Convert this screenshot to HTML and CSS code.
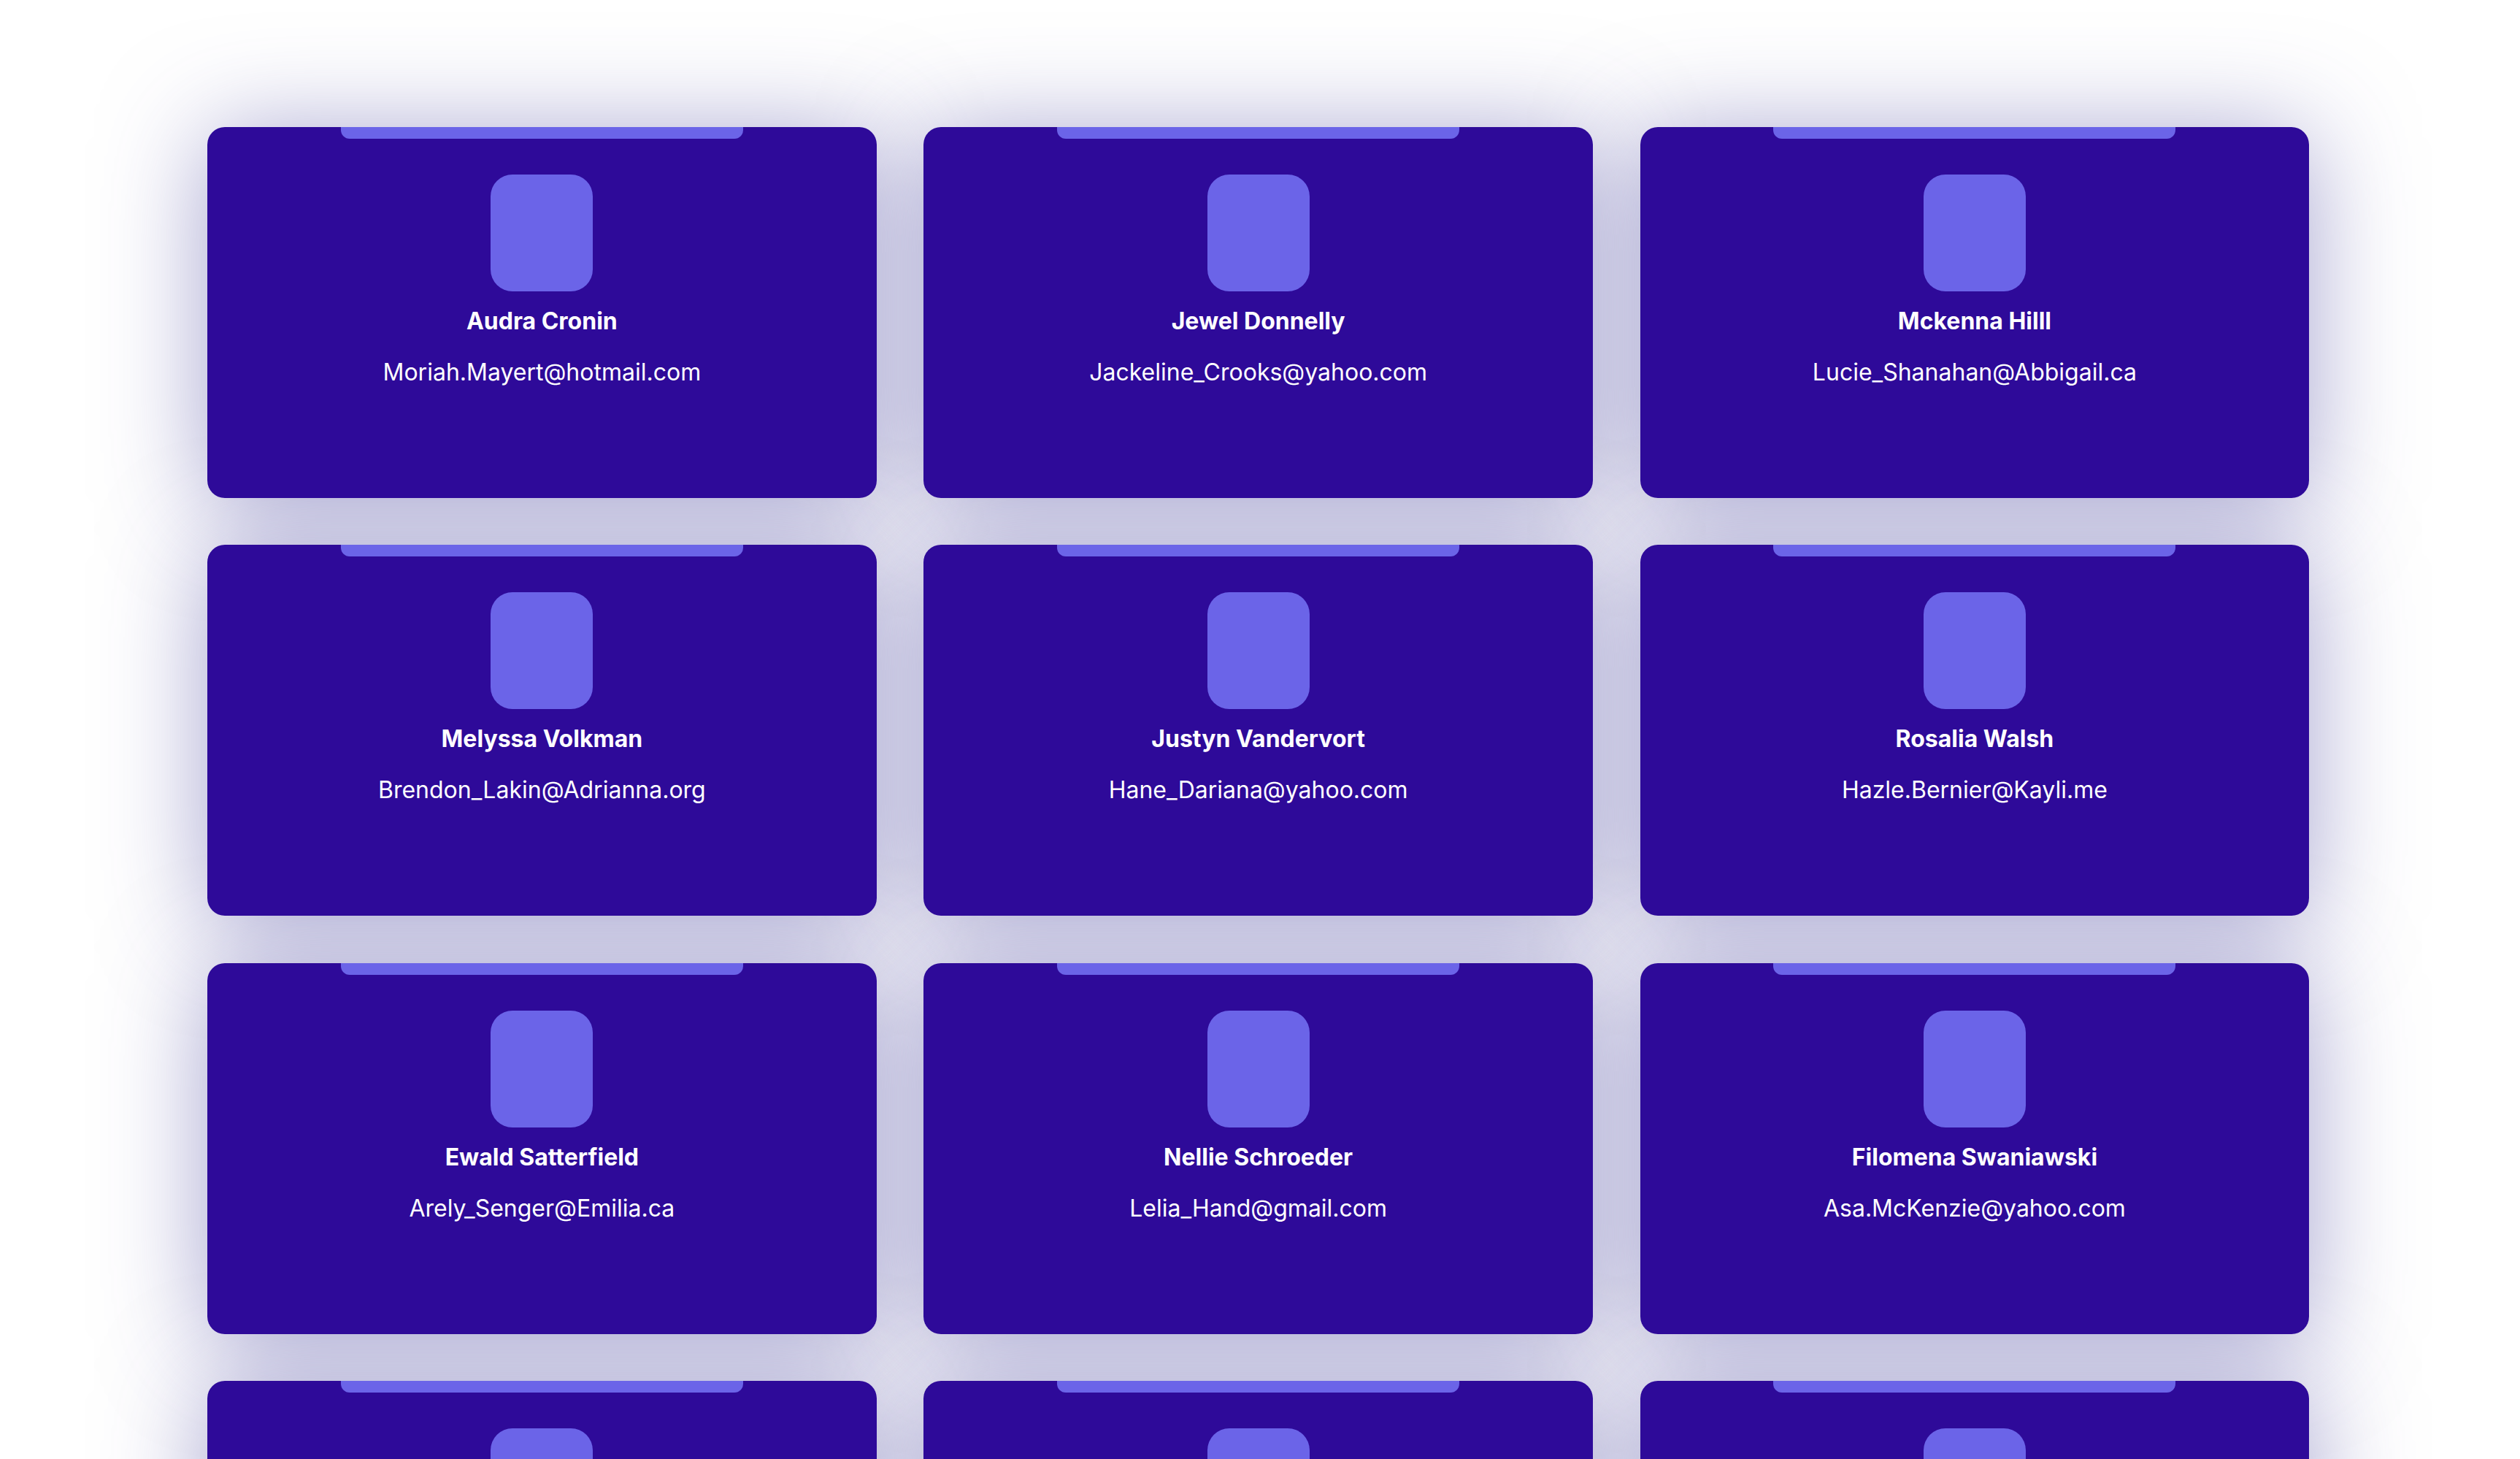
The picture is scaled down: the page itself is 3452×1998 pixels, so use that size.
FILE: index.html
```html
<!DOCTYPE html>
<html lang="en">
<head>
<meta charset="utf-8">
<title>Contacts</title>
<link rel="stylesheet" href="styles.css">
</head>
<body>
<main class="grid">
  <article class="card"><div class="tab"></div><div class="avatar"></div><h2 class="name">Audra Cronin</h2><p class="email">Moriah.Mayert@hotmail.com</p></article>
  <article class="card"><div class="tab"></div><div class="avatar"></div><h2 class="name">Jewel Donnelly</h2><p class="email">Jackeline_Crooks@yahoo.com</p></article>
  <article class="card"><div class="tab"></div><div class="avatar"></div><h2 class="name">Mckenna Hilll</h2><p class="email">Lucie_Shanahan@Abbigail.ca</p></article>
  <article class="card"><div class="tab"></div><div class="avatar"></div><h2 class="name">Melyssa Volkman</h2><p class="email">Brendon_Lakin@Adrianna.org</p></article>
  <article class="card"><div class="tab"></div><div class="avatar"></div><h2 class="name">Justyn Vandervort</h2><p class="email">Hane_Dariana@yahoo.com</p></article>
  <article class="card"><div class="tab"></div><div class="avatar"></div><h2 class="name">Rosalia Walsh</h2><p class="email">Hazle.Bernier@Kayli.me</p></article>
  <article class="card"><div class="tab"></div><div class="avatar"></div><h2 class="name">Ewald Satterfield</h2><p class="email">Arely_Senger@Emilia.ca</p></article>
  <article class="card"><div class="tab"></div><div class="avatar"></div><h2 class="name">Nellie Schroeder</h2><p class="email">Lelia_Hand@gmail.com</p></article>
  <article class="card"><div class="tab"></div><div class="avatar"></div><h2 class="name">Filomena Swaniawski</h2><p class="email">Asa.McKenzie@yahoo.com</p></article>
  <article class="card"><div class="tab"></div><div class="avatar"></div><h2 class="name">Lavada Kuhn</h2><p class="email">Dax.Ward@gmail.com</p></article>
  <article class="card"><div class="tab"></div><div class="avatar"></div><h2 class="name">Ruthe Mertz</h2><p class="email">Elody_Ritchie@hotmail.com</p></article>
  <article class="card"><div class="tab"></div><div class="avatar"></div><h2 class="name">Carmel Bode</h2><p class="email">Kian.Howe@Reta.biz</p></article>
</main>
</body>
</html>
```

FILE: styles.css
```css
html, body {
  margin: 0;
  padding: 0;
  background: #ffffff;
}

body {
  font-family: Inter, "Noto Sans", "Liberation Sans", sans-serif;
  color: #ffffff;
}

.grid {
  position: relative;
  z-index: 0;
  display: grid;
  grid-template-columns: repeat(3, 916.7px);
  column-gap: 64.6px;
  row-gap: 64.4px;
  padding: 174px 0 174px 284px;
}

.card {
  position: relative;
  height: 508px;
  background: #2e0a99;
  border-radius: 24px;
  display: flex;
  flex-direction: column;
  align-items: center;
}

.card::before {
  content: "";
  position: absolute;
  inset: 0;
  z-index: -1;
  border-radius: 24px;
  box-shadow: 0 10px 140px rgba(76, 72, 160, 0.5);
}

.tab {
  width: 551px;
  height: 16px;
  background: #6b64e8;
  border-radius: 0 0 12px 12px;
}

.avatar {
  width: 140px;
  height: 160px;
  margin-top: 49px;
  background: #6b64e8;
  border-radius: 30px;
}

.name {
  margin: 17px 0 0;
  font-size: 32px;
  line-height: 48px;
  font-weight: 700;
}

.email {
  margin: 22px 0 0;
  font-size: 32px;
  line-height: 48px;
  font-weight: 400;
}
```
